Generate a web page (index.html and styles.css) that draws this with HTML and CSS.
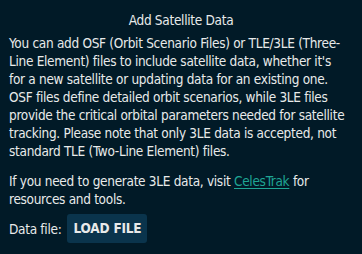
FILE: index.html
```html
<!DOCTYPE html>
<html lang="en">
<head>
<meta charset="utf-8">
<title>Add Satellite Data</title>
<link rel="stylesheet" href="styles.css">
</head>
<body>
<section class="panel">
  <h2 class="title">Add Satellite Data</h2>
  <p class="text">You can add OSF (Orbit Scenario Files) or TLE/3LE (Three-<br>Line Element) files to include satellite data, whether it's<br>for a new satellite or updating data for an existing one.<br>OSF files define detailed orbit scenarios, while 3LE files<br>provide the critical orbital parameters needed for satellite<br>tracking. Please note that only 3LE data is accepted, not<br>standard TLE (Two-Line Element) files.</p>
  <p class="text text-last">If you need to generate 3LE data, visit <a class="link" href="#">CelesTrak</a> for<br>resources and tools.</p>
  <div class="file-row">
    <span class="label">Data file:</span>
    <button class="btn" type="button">LOAD FILE</button>
  </div>
</section>
</body>
</html>
```

FILE: styles.css
```css
html, body {
  margin: 0;
  padding: 0;
  background: #011a27;
}
body {
  width: 362px;
  height: 254px;
  overflow: hidden;
  color: #e8eaea;
  font-family: "DejaVu Sans Condensed", "DejaVu Sans", sans-serif;
  font-stretch: condensed;
  font-size: 13.5px;
  line-height: 18px;
  letter-spacing: -0.3px;
}
.panel {
  padding: 11px 2px 0 9px;
}
.title {
  margin: 0 0 5px;
  font-size: 13.5px;
  font-weight: normal;
  text-align: center;
  line-height: 18px;
  padding-right: 7px;
}
.text {
  margin: 0 0 12px;
  white-space: nowrap;
}
.text-last {
  margin-bottom: 6px;
}
.link {
  color: #1fa594;
  text-decoration: underline;
  text-underline-offset: 2px;
}
.file-row {
  display: flex;
  align-items: center;
  gap: 6px;
}
.btn {
  background: #0a344c;
  color: #e8eaea;
  border: none;
  border-radius: 3px;
  font-family: inherit;
  font-stretch: condensed;
  font-size: 13.5px;
  font-weight: bold;
  letter-spacing: -0.2px;
  line-height: 17px;
  height: 29px;
  padding: 0 6px;
  white-space: nowrap;
}
```
